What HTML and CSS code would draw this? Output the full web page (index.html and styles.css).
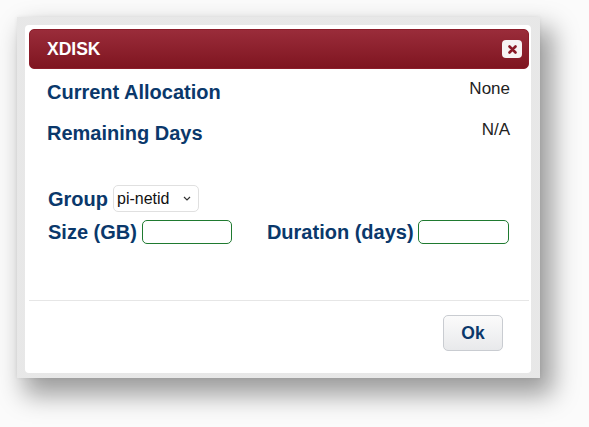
FILE: index.html
```html
<!DOCTYPE html>
<html>
<head>
<meta charset="utf-8">
<link rel="stylesheet" href="styles.css">
</head>
<body>
<div class="frame">
  <div class="dialog">
    <div class="titlebar">
      <span class="title">XDISK</span>
      <button class="close" aria-label="close">
        <svg width="9" height="9" viewBox="0 0 9 9"><path d="M1.5 1.5 L7.5 7.5 M7.5 1.5 L1.5 7.5" stroke="#8a1a27" stroke-width="2.6" stroke-linecap="round"/></svg>
      </button>
    </div>
    <div class="info">
      <div class="info-row"><span class="label">Current Allocation</span><span class="value">None</span></div>
      <div class="info-row"><span class="label">Remaining Days</span><span class="value">N/A</span></div>
    </div>
    <div class="form">
      <div class="form-row">
        <span class="label">Group</span>
        <span class="select-wrap">
          <select class="select"><option>pi-netid</option></select>
          <svg class="chev" width="8" height="5" viewBox="0 0 8 5"><path d="M1 1 L4 4 L7 1" fill="none" stroke="#333" stroke-width="1.2"/></svg>
        </span>
      </div>
      <div class="form-row">
        <span class="label">Size (GB)</span>
        <input class="field" type="text">
        <span class="label dur">Duration (days)</span>
        <input class="field field-dur" type="text">
      </div>
    </div>
    <div class="footer">
      <button class="ok">Ok</button>
    </div>
  </div>
</div>
</body>
</html>
```

FILE: styles.css
```css
html, body {
  margin: 0;
  padding: 0;
  background: #fbfbfb;
}
html {
  height: 100%;
}
body {
  min-height: 100%;
  box-sizing: border-box;
  padding: 17px 0 0 17px;
  font-family: "Liberation Sans", Arial, sans-serif;
}
.frame {
  width: 523px;
  height: 361px;
  box-sizing: border-box;
  padding: 8px 9px 5px 8px;
  background: #dedede;
  background-image: radial-gradient(#e8e8e8 0.7px, transparent 0.8px);
  background-size: 2px 2px;
  box-shadow: 0 0 4px rgba(0,0,0,0.06), 10px 14px 24px 3px rgba(0,0,0,0.38);
}
.dialog {
  height: 100%;
  background: #fff;
  border-radius: 4px;
  display: flex;
  flex-direction: column;
}
.titlebar {
  margin: 4px 2px 0 4px;
  height: 40px;
  box-sizing: border-box;
  border: 1px solid #8c1d2a;
  border-radius: 5px;
  background: linear-gradient(#9a2c3a, #7f1520);
  display: flex;
  align-items: center;
  justify-content: space-between;
  padding: 0 6px 0 17px;
}
.title {
  color: #fff;
  font-weight: bold;
  font-size: 17.5px;
}
.close {
  width: 20px;
  height: 18px;
  padding: 0;
  border: 0;
  border-radius: 4px;
  background: #f7f3f3;
  display: flex;
  align-items: center;
  justify-content: center;
}
.info {
  padding: 11px 21px 0 22px;
  display: flex;
  flex-direction: column;
  gap: 17px;
}
.info-row {
  display: flex;
  justify-content: space-between;
  align-items: flex-start;
}
.label {
  color: #0a386b;
  font-weight: bold;
  font-size: 20px;
  line-height: 24px;
}
.value {
  color: #222;
  font-size: 17px;
  line-height: 18px;
}
.form {
  margin-top: 40px;
  padding-left: 23px;
  display: flex;
  flex-direction: column;
  gap: 7px;
}
.form-row {
  display: flex;
  align-items: center;
  gap: 5px;
}
.form-row .label {
  padding-top: 1px;
}
.select-wrap {
  position: relative;
  display: block;
}
.select {
  appearance: none;
  -webkit-appearance: none;
  width: 86px;
  height: 27px;
  box-sizing: border-box;
  border: 1px solid #e0e0e0;
  border-radius: 5px;
  background: #fff;
  font-family: "Liberation Sans", Arial, sans-serif;
  font-size: 16px;
  color: #111;
  padding: 0 0 0 3px;
  margin: 0;
}
.chev {
  position: absolute;
  right: 8px;
  top: 11px;
}
.field {
  width: 90px;
  height: 24px;
  box-sizing: border-box;
  border: 1px solid #1f7a30;
  border-radius: 5px;
  background: #fff;
  margin: 0;
  padding: 0 4px;
}
.dur {
  margin-left: 30px;
}
.field-dur {
  width: 91px;
  margin-left: -1px;
}
.footer {
  margin-top: auto;
  margin-left: 4px;
  margin-right: 2px;
  border-top: 1px solid #e6e6e6;
  padding: 14px 26px 22px 0;
  display: flex;
  justify-content: flex-end;
}
.ok {
  width: 60px;
  height: 36px;
  border: 1px solid #c9ccd1;
  border-radius: 5px;
  background: linear-gradient(#fbfbfb, #e8e9eb);
  color: #0a386b;
  font-family: "Liberation Sans", Arial, sans-serif;
  font-weight: bold;
  font-size: 17.5px;
  padding: 0;
}
```
